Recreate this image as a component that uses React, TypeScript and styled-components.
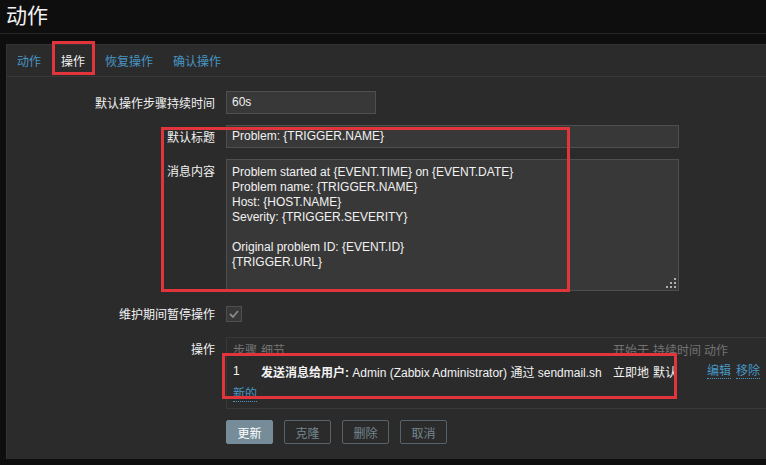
import styled, { createGlobalStyle } from 'styled-components';

const GlobalStyle = createGlobalStyle`
  html, body {
    margin: 0;
    padding: 0;
    background: #0e0e0e;
    overflow: hidden;
  }
  body {
    font-family: "Liberation Sans", Arial, "Noto Sans CJK SC", sans-serif;
    font-size: 12px;
    color: #f2f2f2;
  }
`;

const Page = styled.div`
  position: relative;
  width: 766px;
  height: 465px;
  overflow: hidden;
`;

const Header = styled.header`
  height: 33px;
  display: flex;
  align-items: center;
  padding-left: 6px;
  border-bottom: 1px solid #262626;
  margin-bottom: 10px;
`;

const Title = styled.h1`
  margin: 0;
  font-family: "Noto Sans CJK SC", sans-serif;
  font-size: 21px;
  font-weight: 400;
  line-height: 1;
  color: #f2f2f2;
  margin-top: -4px;
`;

const Panel = styled.div`
  margin-left: 6px;
  width: 820px;
  height: 415px;
  background: #2b2b2b;
  border-top: 1px solid #333333;
  border-left: 1px solid #333333;
  box-sizing: border-box;
`;

const TabBar = styled.nav`
  display: flex;
  height: 31px;
  align-items: center;
  border-bottom: 1px solid #383838;
`;

const Tab = styled.span<{ $active?: boolean }>`
  padding: 0 10px;
  line-height: 31px;
  font-family: "Noto Sans CJK SC", sans-serif;
  font-size: 12px;
  color: ${p => (p.$active ? '#f2f2f2' : '#4796c4')};
  cursor: pointer;
`;

const Form = styled.div`
  display: grid;
  grid-template-columns: 208px 1fr;
  column-gap: 11px;
  row-gap: 11px;
  padding-top: 14px;
`;

const Label = styled.div`
  text-align: right;
  line-height: 23px;
  height: 23px;
  white-space: nowrap;
  font-family: "Noto Sans CJK SC", sans-serif;
  font-size: 12px;
  color: #f2f2f2;
`;

const Field = styled.div`
  display: flex;
  align-items: flex-start;
`;

const TextBox = styled.div<{ $width: number }>`
  width: ${p => p.$width}px;
  height: 23px;
  box-sizing: border-box;
  background: #383838;
  border: 1px solid #4f4f4f;
  padding: 0 5px;
  line-height: 21px;
  color: #f2f2f2;
`;

const TextArea = styled.div`
  position: relative;
  width: 453px;
  height: 132px;
  box-sizing: border-box;
  background: #383838;
  border: 1px solid #4f4f4f;
  padding: 5px 5px;
  line-height: 15px;
  white-space: pre;
  color: #f2f2f2;
`;

const Grip = styled.svg`
  position: absolute;
  right: 2px;
  bottom: 2px;
`;

const CheckRow = styled.div`
  display: flex;
  align-items: center;
  height: 24px;
`;

const CheckLabel = styled(Label)`
  height: 24px;
  line-height: 24px;
`;

const Checkbox = styled.span`
  display: flex;
  align-items: center;
  justify-content: center;
  width: 16px;
  height: 16px;
  box-sizing: border-box;
  background: #383838;
  border: 1px solid #4f4f4f;
`;

const TopLabel = styled(Label)`
  line-height: 24px;
`;

const OpsTable = styled.div`
  width: 560px;
  height: 72px;
  box-sizing: border-box;
  border: 1px solid #383838;
  padding: 0 6px;
`;

const OpsRow = styled.div<{ $head?: boolean }>`
  display: grid;
  grid-template-columns: 28px 352px 40px 51px 1fr;
  height: 22px;
  align-items: center;
  white-space: nowrap;
  color: ${p => (p.$head ? '#737373' : '#f2f2f2')};
  font-family: "Liberation Sans", "Noto Sans CJK SC", sans-serif;
`;

const Cell = styled.span`
  overflow: visible;
`;

const Strong = styled.b`
  font-weight: 700;
`;

const Links = styled.span`
  display: flex;
  gap: 5px;
  padding-left: 3px;
`;

const Link = styled.a`
  color: #4796c4;
  text-decoration: none;
  border-bottom: 1px dotted #4796c4;
  line-height: 14px;
  cursor: pointer;
`;

const NewRow = styled.div`
  height: 24px;
  display: flex;
  align-items: center;
`;

const Buttons = styled.div`
  display: flex;
  gap: 11px;
`;

const Button = styled.button<{ $primary?: boolean }>`
  width: 47px;
  height: 24px;
  padding: 0;
  font-family: "Noto Sans CJK SC", sans-serif;
  font-size: 12px;
  border: 1px solid ${p => (p.$primary ? '#768d99' : '#56636b')};
  background: ${p => (p.$primary ? '#768d99' : 'transparent')};
  color: ${p => (p.$primary ? '#ffffff' : '#74868f')};
  border-radius: 2px;
  cursor: pointer;
`;

const Marker = styled.div<{ $x: number; $y: number; $w: number; $h: number }>`
  position: absolute;
  left: ${p => p.$x}px;
  top: ${p => p.$y}px;
  width: ${p => p.$w}px;
  height: ${p => p.$h}px;
  box-sizing: border-box;
  border: 3px solid #e2353b;
  pointer-events: none;
`;

const message = `Problem started at {EVENT.TIME} on {EVENT.DATE}
Problem name: {TRIGGER.NAME}
Host: {HOST.NAME}
Severity: {TRIGGER.SEVERITY}

Original problem ID: {EVENT.ID}
{TRIGGER.URL}`;

const App = () => {
  return (
    <Page>
      <GlobalStyle />
      <Header>
        <Title>动作</Title>
      </Header>

      <Panel>
        <TabBar>
          <Tab>动作</Tab>
          <Tab $active>操作</Tab>
          <Tab>恢复操作</Tab>
          <Tab>确认操作</Tab>
        </TabBar>

        <Form>
          <Label>默认操作步骤持续时间</Label>
          <Field>
            <TextBox $width={150}>60s</TextBox>
          </Field>

          <Label>默认标题</Label>
          <Field>
            <TextBox $width={453}>Problem: {'{TRIGGER.NAME}'}</TextBox>
          </Field>

          <TopLabel>消息内容</TopLabel>
          <Field>
            <TextArea>
              {message}
              <Grip width="10" height="10" viewBox="0 0 10 10">
                <rect x="8" y="0" width="2" height="2" fill="#b0b0b0" />
                <rect x="4" y="4" width="2" height="2" fill="#b0b0b0" />
                <rect x="8" y="4" width="2" height="2" fill="#b0b0b0" />
                <rect x="0" y="8" width="2" height="2" fill="#b0b0b0" />
                <rect x="4" y="8" width="2" height="2" fill="#b0b0b0" />
                <rect x="8" y="8" width="2" height="2" fill="#b0b0b0" />
              </Grip>
            </TextArea>
          </Field>

          <CheckLabel>维护期间暂停操作</CheckLabel>
          <CheckRow>
            <Checkbox>
              <svg width="12" height="12" viewBox="0 0 12 12">
                <polyline points="2,6 5,9 10,3" fill="none" stroke="#8a8a8a" strokeWidth="1.8" />
              </svg>
            </Checkbox>
          </CheckRow>

          <TopLabel>操作</TopLabel>
          <OpsTable>
            <OpsRow $head>
              <Cell>步骤</Cell>
              <Cell>细节</Cell>
              <Cell>开始于</Cell>
              <Cell>持续时间</Cell>
              <Cell>动作</Cell>
            </OpsRow>
            <OpsRow>
              <Cell>1</Cell>
              <Cell>
                <Strong>发送消息给用户:</Strong> Admin (Zabbix Administrator) 通过 sendmail.sh
              </Cell>
              <Cell>立即地</Cell>
              <Cell>默认</Cell>
              <Links>
                <Link>编辑</Link>
                <Link>移除</Link>
              </Links>
            </OpsRow>
            <NewRow>
              <Link>新的</Link>
            </NewRow>
          </OpsTable>

          <div />
          <Buttons>
            <Button $primary>更新</Button>
            <Button>克隆</Button>
            <Button>删除</Button>
            <Button>取消</Button>
          </Buttons>
        </Form>
      </Panel>

      <Marker $x={52} $y={41} $w={43} $h={34} />
      <Marker $x={161} $y={127} $w={409} $h={165} />
      <Marker $x={222} $y={353} $w={455} $h={46} />
    </Page>
  );
};

export default App;
